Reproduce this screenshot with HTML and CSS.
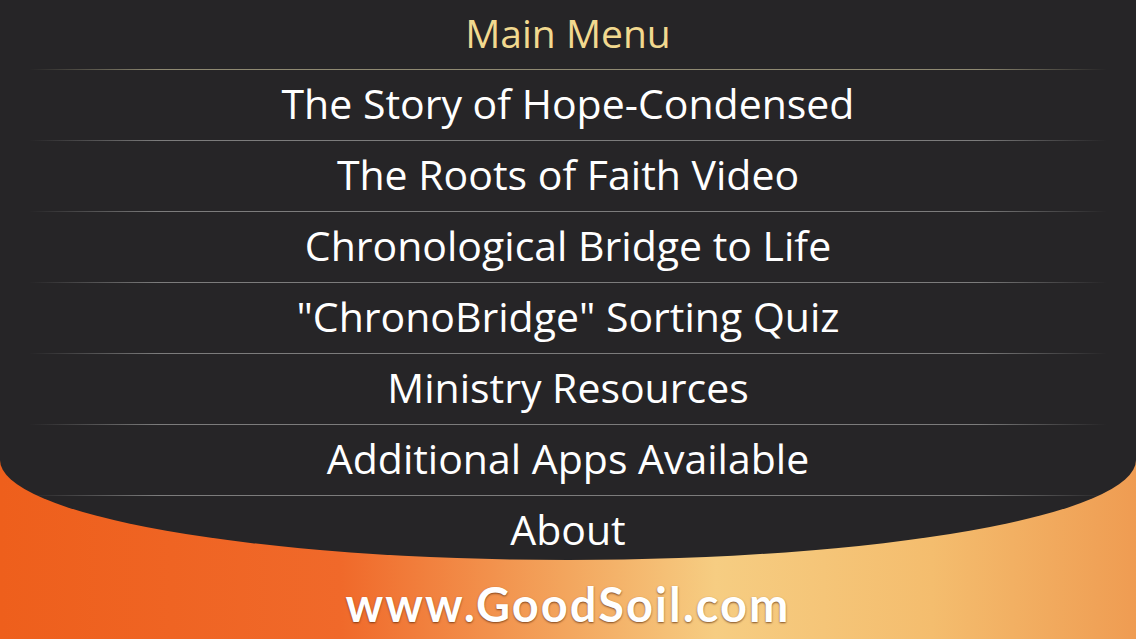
FILE: index.html
```html
<!DOCTYPE html>
<html lang="en">
<head>
    <meta charset="UTF-8">
    <meta name="viewport" content="width=device-width, initial-scale=1.0">
    <title>Main Menu</title>
    <link rel="stylesheet" href="styles.css">
</head>
<body>
    <div class="panel">
        <h1 class="title">Main Menu</h1>
        <ul class="menu">
            <li><a href="#story">The Story of Hope-Condensed</a></li>
            <li><a href="#roots">The Roots of Faith Video</a></li>
            <li><a href="#bridge">Chronological Bridge to Life</a></li>
            <li><a href="#quiz">"ChronoBridge" Sorting Quiz</a></li>
            <li><a href="#resources">Ministry Resources</a></li>
            <li><a href="#apps">Additional Apps Available</a></li>
            <li><a href="#about">About</a></li>
        </ul>
    </div>

    <footer class="site">
        <a href="#site">www.GoodSoil.com</a>
    </footer>
</body>
</html>
```

FILE: styles.css
```css
* {
    margin: 0;
    padding: 0;
    box-sizing: border-box;
}

html, body {
    height: 100%;
}

body {
    font-family: "Open Sans", "DejaVu Sans", sans-serif;
    background: linear-gradient(to right, #ee5f1c 0%, #f0692a 30%, #f3a65e 50%, #f6cd82 63%, #f4bd6e 82%, #ef9c52 100%);
    overflow: hidden;
    display: flex;
    flex-direction: column;
}

.panel {
    height: 560px;
    background-color: #262527;
    border-radius: 0 0 50% 50% / 0 0 100px 100px;
}

.title {
    height: 70px;
    margin: 0 30px;
    font-weight: 400;
    font-size: 39px;
    line-height: 66px;
    text-align: center;
    color: #f2d98f;
    border-bottom: 1px solid;
    border-image: linear-gradient(to right, transparent, #8f8a72 12%, #8f8a72 88%, transparent) 1;
}

.menu {
    list-style: none;
}

.menu li {
    height: 71px;
    margin: 0 30px;
    border-bottom: 1px solid;
    border-image: linear-gradient(to right, transparent, #7c7c7c 12%, #7c7c7c 88%, transparent) 1;
    text-align: center;
}

.menu li:last-child {
    border-bottom: none;
}

.menu a {
    display: block;
    color: #ffffff;
    text-decoration: none;
    font-size: 41px;
    line-height: 66px;
}

.site {
    flex: 1;
    display: flex;
    align-items: center;
    justify-content: center;
    padding-top: 8px;
}

.site a {
    color: #ffffff;
    text-decoration: none;
    font-family: "Lato", "DejaVu Sans", sans-serif;
    font-weight: 700;
    font-size: 47px;
    letter-spacing: 2px;
    text-shadow: 0 1px 2px rgba(90, 40, 10, 0.75);
}
```
